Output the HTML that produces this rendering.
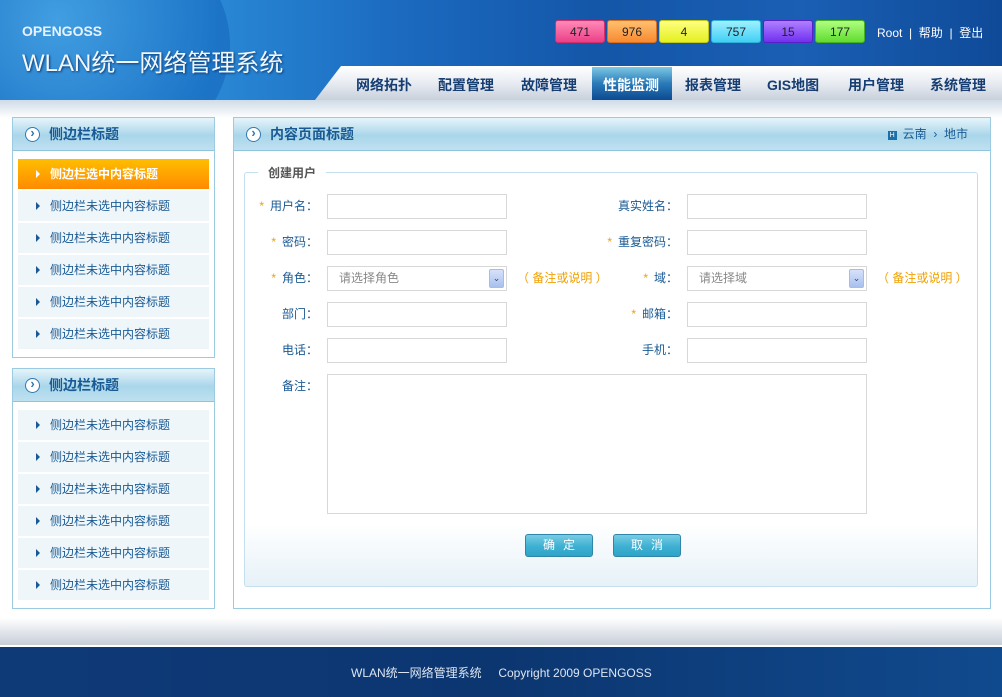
<!DOCTYPE html>
<html><head><meta charset="utf-8"><style>
*{margin:0;padding:0;box-sizing:border-box}
body{width:1002px;height:697px;position:relative;overflow:hidden;background:#fff;font-family:"Liberation Sans","Noto Sans CJK SC",sans-serif;font-size:12px}
.abs{position:absolute}
#hdr{left:0;top:0;width:1002px;height:101px;overflow:hidden;background:linear-gradient(90deg,#1a6fc0 0%,#2a8ad6 20%,#1b6ac0 40%,#1456a8 60%,#1a5fb4 80%,#0f4a98 100%)}
#globe{left:-60px;top:-80px;width:290px;height:250px;border-radius:50%;background:radial-gradient(circle at 40% 40%,#4aa8e8,#1a70c4 70%,#1a6ac0);opacity:.8}
.nav{left:315px;top:66px;width:687px;height:34px;background:linear-gradient(#fff,#e8ecf2 50%,#c8d0dc);clip-path:polygon(26px 0,100% 0,100% 100%,0 100%)}
.nv{top:66px;height:34px;line-height:38px;font-weight:bold;font-size:14px;color:#173e72}
.act{left:592px;width:80px;top:67px;height:33px;background:linear-gradient(#7cc8e4,#2a7ab8 50%,#0c4a90)}
.bd{top:20px;height:23px;width:50px;border-radius:3px;text-align:center;line-height:23px;font-size:12px;color:#222}
.tl{color:#fff;top:24px;font-size:12px}
#sub{left:0;top:100px;width:1002px;height:18px;background:linear-gradient(#cfdbe6,#fff)}
.box{border:1px solid #9ccae0;background:#fff}
.bt{height:33px;background:linear-gradient(#e6f4fa,#a9d6ea 55%,#bfe1f0);border-bottom:1px solid #8ec4de;font-weight:bold;font-size:14px;color:#1a5a94;line-height:33px;padding-left:36px;position:relative}
.bt:before{content:"›";position:absolute;left:12px;top:9px;width:13px;height:13px;border:1.5px solid #2f78b4;border-radius:50%;background:#fff;color:#2f78b4;line-height:10px;text-align:center;font-size:13px;font-weight:bold}
.it{position:absolute;left:5px;width:191px;height:30px;background:#eef6fa;color:#1a5a94;line-height:30px;padding-left:32px;font-size:12px}
.it:before{content:"";position:absolute;left:18px;top:11px;border-left:4px solid #1a5a94;border-top:4px solid transparent;border-bottom:4px solid transparent}
.it.sel{background:linear-gradient(#ffbe00,#ff8a00);color:#fff;font-weight:bold}
.it.sel:before{border-left-color:#fff}
.lb{color:#1a5a94;font-size:12px;text-align:right;line-height:25px}
.st{color:#f0a000;margin-right:6px}
.in{height:25px;border:1px solid #d8d8d8;background:#fff}
.sel2{color:#888;padding-left:11px;line-height:23px}
.dd{position:absolute;right:2px;top:2px;width:15px;height:19px;background:linear-gradient(#d6e2fa,#a8c0ee);border:1px solid #a8bde6;border-radius:2px;color:#445;font-size:9px;text-align:center;line-height:17px}
.nt{color:#f0a000;line-height:25px}
.btn{top:534px;width:68px;height:23px;border:1px solid #2f86a8;border-radius:3px;background:linear-gradient(#78cce4,#3eb0d2 55%,#2ea4c8);color:#fff;text-align:center;line-height:21px;letter-spacing:8px;padding-left:8px}
#foot{left:0;top:645px;width:1002px;height:52px;background:linear-gradient(90deg,#0e3a78,#0c3670 50%,#104a8e);border-top:2px solid #fff;color:#dde6f2;font-size:12px}
</style></head><body>
<div id="hdr" class="abs"><div id="globe" class="abs"></div></div>
<div class="abs" style="left:22px;top:23px;color:#e8f2fc;font-size:14px;font-weight:bold">OPENGOSS</div>
<div class="abs" style="left:22px;top:43px;color:#f0f6fc;font-size:24px;text-shadow:1px 1px 2px #0a3a70">WLAN统一网络管理系统</div>
<div class="abs bd" style="left:555px;background:linear-gradient(#ff8ab8,#ec4088);border:1px solid #d0306e">471</div>
<div class="abs bd" style="left:607px;background:linear-gradient(#ffc070,#f88a30);border:1px solid #d87020">976</div>
<div class="abs bd" style="left:659px;background:linear-gradient(#ffff80,#e4f020);border:1px solid #c0c820">4</div>
<div class="abs bd" style="left:711px;background:linear-gradient(#a0f0ff,#40d0f4);border:1px solid #30b0d8">757</div>
<div class="abs bd" style="left:763px;background:linear-gradient(#b080ff,#7030f0);border:1px solid #5a20c8">15</div>
<div class="abs bd" style="left:815px;background:linear-gradient(#b0ff80,#60dc30);border:1px solid #48b020">177</div>
<div class="abs tl" style="left:877px">Root &nbsp;| &nbsp;帮助 &nbsp;| &nbsp;登出</div>
<div class="abs nav"></div>
<div class="abs act"></div>
<div class="abs nv" style="left:356px">网络拓扑</div>
<div class="abs nv" style="left:438px">配置管理</div>
<div class="abs nv" style="left:521px">故障管理</div>
<div class="abs nv" style="left:603px;color:#fff">性能监测</div>
<div class="abs nv" style="left:685px">报表管理</div>
<div class="abs nv" style="left:767px">GIS地图</div>
<div class="abs nv" style="left:848px">用户管理</div>
<div class="abs nv" style="left:930px">系统管理</div>
<div id="sub" class="abs"></div>

<div class="abs box" style="left:12px;top:117px;width:203px;height:241px">
<div class="bt">侧边栏标题</div>
<div class="it sel" style="top:41px">侧边栏选中内容标题</div>
<div class="it" style="top:73px">侧边栏未选中内容标题</div>
<div class="it" style="top:105px">侧边栏未选中内容标题</div>
<div class="it" style="top:137px">侧边栏未选中内容标题</div>
<div class="it" style="top:169px">侧边栏未选中内容标题</div>
<div class="it" style="top:201px">侧边栏未选中内容标题</div>
</div>
<div class="abs box" style="left:12px;top:368px;width:203px;height:241px">
<div class="bt">侧边栏标题</div>
<div class="it" style="top:41px">侧边栏未选中内容标题</div>
<div class="it" style="top:73px">侧边栏未选中内容标题</div>
<div class="it" style="top:105px">侧边栏未选中内容标题</div>
<div class="it" style="top:137px">侧边栏未选中内容标题</div>
<div class="it" style="top:169px">侧边栏未选中内容标题</div>
<div class="it" style="top:201px">侧边栏未选中内容标题</div>
</div>

<div class="abs box" style="left:233px;top:117px;width:758px;height:492px">
<div class="bt">内容页面标题<span style="position:absolute;right:22px;font-weight:normal;font-size:12px;color:#1a5a94"><span style="display:inline-block;width:9px;height:9px;background:#1a70a8;color:#fff;font-size:7px;line-height:9px;text-align:center;vertical-align:1px;margin-right:6px">H</span>云南 &nbsp;›&nbsp; 地市</span></div>
</div>
<div class="abs" style="left:244px;top:172px;width:734px;height:415px;border:1px solid #c4e0ee;border-radius:3px;background:linear-gradient(#fff 0%,#fff 85%,#e6f1f8 100%)"></div>
<div class="abs" style="left:258px;top:165px;background:#fff;padding:0 10px;color:#555;font-weight:bold;line-height:16px">创建用户</div>

<div class="abs lb" style="left:250px;top:194px;width:68px"><span class="st">*</span>用户名：</div>
<div class="abs in" style="left:327px;top:194px;width:180px"></div>
<div class="abs lb" style="left:580px;top:194px;width:98px">真实姓名：</div>
<div class="abs in" style="left:687px;top:194px;width:180px"></div>

<div class="abs lb" style="left:250px;top:230px;width:68px"><span class="st">*</span>密码：</div>
<div class="abs in" style="left:327px;top:230px;width:180px"></div>
<div class="abs lb" style="left:580px;top:230px;width:98px"><span class="st">*</span>重复密码：</div>
<div class="abs in" style="left:687px;top:230px;width:180px"></div>

<div class="abs lb" style="left:250px;top:266px;width:68px"><span class="st">*</span>角色：</div>
<div class="abs in sel2" style="left:327px;top:266px;width:180px">请选择角色<div class="dd">⌄</div></div>
<div class="abs nt" style="left:517px;top:266px">（ 备注或说明 ）</div>
<div class="abs lb" style="left:580px;top:266px;width:98px"><span class="st">*</span>域：</div>
<div class="abs in sel2" style="left:687px;top:266px;width:180px">请选择域<div class="dd">⌄</div></div>
<div class="abs nt" style="left:877px;top:266px">（ 备注或说明 ）</div>

<div class="abs lb" style="left:250px;top:302px;width:68px">部门：</div>
<div class="abs in" style="left:327px;top:302px;width:180px"></div>
<div class="abs lb" style="left:580px;top:302px;width:98px"><span class="st">*</span>邮箱：</div>
<div class="abs in" style="left:687px;top:302px;width:180px"></div>

<div class="abs lb" style="left:250px;top:338px;width:68px">电话：</div>
<div class="abs in" style="left:327px;top:338px;width:180px"></div>
<div class="abs lb" style="left:580px;top:338px;width:98px">手机：</div>
<div class="abs in" style="left:687px;top:338px;width:180px"></div>

<div class="abs lb" style="left:250px;top:374px;width:68px">备注：</div>
<div class="abs in" style="left:327px;top:374px;width:540px;height:140px"></div>

<div class="abs btn" style="left:525px">确定</div>
<div class="abs btn" style="left:613px">取消</div>

<div class="abs" style="left:0;top:618px;width:1002px;height:27px;background:linear-gradient(#fff,#c6ced8)"></div>
<div id="foot" class="abs"><div class="abs" style="left:351px;top:17px">WLAN统一网络管理系统 &nbsp; &nbsp; Copyright 2009 OPENGOSS</div></div>
</body></html>
